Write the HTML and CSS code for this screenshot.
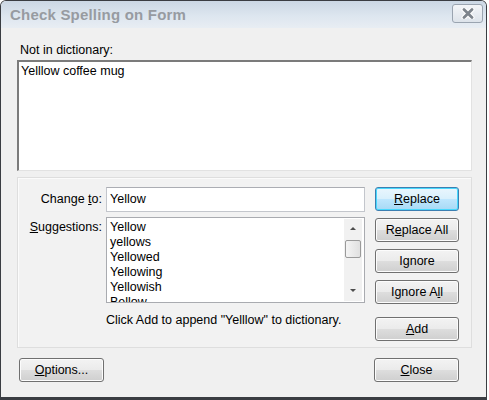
FILE: index.html
```
<!DOCTYPE html>
<html lang="en">
<head>
    <meta charset="UTF-8">
    <meta name="viewport" content="width=device-width, initial-scale=1.0">
    <title>Check Spelling on Form</title>
    <link rel="stylesheet" href="styles.css">
</head>
<body>

<div class="window">
    <div class="titlebar">
        <div class="title">Check Spelling on Form</div>
        <div class="close-x">
            <svg width="18" height="11" viewBox="0 0 18 11">
                <path d="M5 1.5 L13 9.5 M13 1.5 L5 9.5" stroke="#ffffff" stroke-width="5" stroke-linecap="round"/>
                <path d="M5 1.5 L13 9.5 M13 1.5 L5 9.5" stroke="#7d848c" stroke-width="2.8" stroke-linecap="round"/>
            </svg>
        </div>
    </div>

    <div class="content">
        <div class="label-top">Not in dictionary:</div>
        <div class="sentence">Yelllow coffee mug</div>

        <div class="panel">
            <div class="fields">
                <div class="field-label center">Change <u>t</u>o:</div>
                <div class="change-input">Yellow</div>

                <div class="field-label"><u>S</u>uggestions:</div>
                <div class="listbox">
                    <ul class="items">
                        <li>Yellow</li>
                        <li>yellows</li>
                        <li>Yellowed</li>
                        <li>Yellowing</li>
                        <li>Yellowish</li>
                        <li>Bellow</li>
                    </ul>
                    <div class="scrollbar">
                        <div class="arrow up"></div>
                        <div class="thumb"></div>
                        <div class="arrow down"></div>
                    </div>
                </div>

                <div></div>
                <div class="hint">Click Add to append "Yelllow" to dictionary.</div>
            </div>

            <div class="buttons">
                <button class="btn default"><u>R</u>eplace</button>
                <button class="btn">R<u>e</u>place All</button>
                <button class="btn">I<u>g</u>nore</button>
                <button class="btn">Ignore A<u>l</u>l</button>
                <button class="btn add"><u>A</u>dd</button>
            </div>
        </div>

        <div class="footer">
            <button class="btn"><u>O</u>ptions...</button>
            <button class="btn"><u>C</u>lose</button>
        </div>
    </div>
</div>

</body>
</html>
```

FILE: styles.css
```
body {
    margin: 0;
    background: #ffffff;
    font-family: 'Liberation Sans', Arial, sans-serif;
    font-size: 12.5px;
    color: #000;
}
.window {
    width: 487px;
    height: 400px;
    box-sizing: border-box;
    border: 1px solid #3a3d42;
    border-bottom-width: 3px;
    border-radius: 6px 6px 0 0;
    background: #f0f0f0;
    overflow: hidden;
}
.titlebar {
    height: 27px;
    display: flex;
    align-items: center;
    justify-content: space-between;
    padding: 0 3px 0 9px;
    background: linear-gradient(#cbd7e4, #dde6ef 55%, #e8edf3);
}
.title {
    font-size: 15px;
    font-weight: bold;
    color: #979ba1;
    letter-spacing: 0.2px;
}
.close-x {
    width: 29px;
    height: 17px;
    margin-top: -2px;
    border: 1px solid #9aa4b0;
    border-radius: 3px;
    background: linear-gradient(#f3f5f8, #dde3ea);
    display: flex;
    align-items: center;
    justify-content: center;
}
.close-x svg {
    display: block;
}
.content {
    padding: 0 14px 0 16px;
}
.label-top {
    margin-top: 15px;
    margin-left: 3px;
    line-height: 15px;
}
.sentence {
    margin-top: 2px;
    height: 111px;
    box-sizing: border-box;
    background: #fff;
    border-top: 2px solid #7b7b7b;
    border-left: 2px solid #7b7b7b;
    border-right: 1px solid #e2e2e2;
    border-bottom: 1px solid #e2e2e2;
    padding: 2px 2px;
    line-height: 15px;
}
.panel {
    margin-top: 6px;
    height: 171px;
    box-sizing: border-box;
    border: 1px solid #dedede;
    box-shadow: inset 1px 1px #fbfbfb;
    background: #f2f2f2;
    display: flex;
    padding: 9px 13px 0 0;
}
.fields {
    display: grid;
    grid-template-columns: 84px 259px;
    grid-template-rows: 25px 86px auto;
    column-gap: 4px;
    row-gap: 5px;
}
.field-label {
    text-align: right;
    padding-top: 3px;
    line-height: 15px;
}
.field-label.center {
    padding-top: 5px;
}
.change-input {
    box-sizing: border-box;
    background: #fff;
    border: 1px solid #c3c6cc;
    border-top-color: #abadb3;
    padding: 4px 3px;
    line-height: 15px;
}
.listbox {
    box-sizing: border-box;
    background: #fff;
    border: 1px solid #a9abb0;
    display: flex;
    overflow: hidden;
}
.items {
    list-style: none;
    margin: 0;
    padding: 2px 3px;
    flex: 1;
    line-height: 15px;
}
.scrollbar {
    width: 18px;
    margin: 1px 2px 1px 0;
    background: #f1f1f1;
    display: flex;
    flex-direction: column;
    align-items: center;
}
.arrow {
    width: 0;
    height: 0;
    border-left: 3px solid transparent;
    border-right: 3px solid transparent;
}
.arrow.up {
    margin-top: 8px;
    border-bottom: 3px solid #4d4d4d;
}
.arrow.down {
    margin-top: auto;
    margin-bottom: 9px;
    border-top: 3px solid #4d4d4d;
}
.thumb {
    width: 16px;
    height: 18px;
    margin-top: 10px;
    box-sizing: border-box;
    border: 1px solid #9a9a9a;
    border-radius: 2px;
    background: linear-gradient(90deg, #f4f4f4, #e0e0e0);
}
.hint {
    margin-top: 5px;
    line-height: 15px;
}
.buttons {
    margin-left: 10px;
    display: flex;
    flex-direction: column;
    gap: 7px;
}
.btn {
    width: 84px;
    height: 24px;
    padding: 0;
    font-family: 'Liberation Sans', Arial, sans-serif;
    font-size: 12.5px;
    color: #000;
    border: 1px solid #707070;
    border-radius: 3px;
    background: linear-gradient(#f3f3f3, #ebebeb 48%, #dddddd 52%, #cfcfcf);
    box-shadow: inset 0 0 0 1px #fcfcfc;
}
.btn.default {
    border-color: #3c7fb1;
    background: linear-gradient(#eaf6fd, #d9f0fc 48%, #bee6fd 52%, #a7d9f5);
    box-shadow: inset 0 0 0 1px #48d8fd;
}
.btn.add {
    margin-top: 6px;
}
.footer {
    margin-top: 10px;
    padding-left: 2px;
    display: flex;
    justify-content: space-between;
    padding-right: 13px;
}
.footer .btn {
    width: 85px;
}
```
